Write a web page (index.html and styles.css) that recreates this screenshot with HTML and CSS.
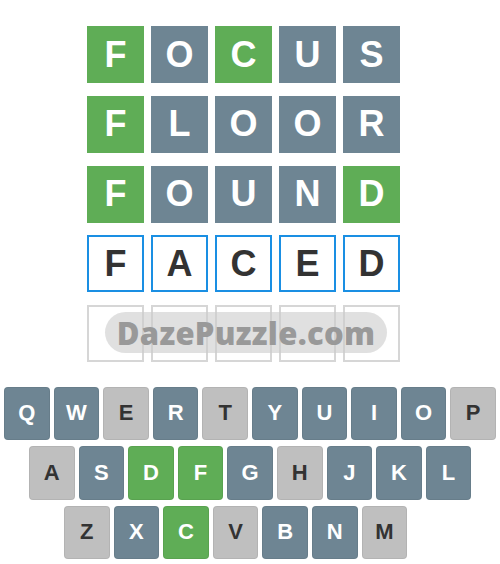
FILE: index.html
```html
<!DOCTYPE html>
<html>
<head>
<meta charset="utf-8">
<link rel="stylesheet" href="styles.css">
</head>
<body>
<div class="page">
  <div class="board">
    <div class="tile g">F</div><div class="tile x">O</div><div class="tile g">C</div><div class="tile x">U</div><div class="tile x">S</div>
    <div class="tile g">F</div><div class="tile x">L</div><div class="tile x">O</div><div class="tile x">O</div><div class="tile x">R</div>
    <div class="tile g">F</div><div class="tile x">O</div><div class="tile x">U</div><div class="tile x">N</div><div class="tile g">D</div>
    <div class="tile t">F</div><div class="tile t">A</div><div class="tile t">C</div><div class="tile t">E</div><div class="tile t">D</div>
    <div class="tile e"></div><div class="tile e"></div><div class="tile e"></div><div class="tile e"></div><div class="tile e"></div>
    <div class="mark">DazePuzzle.com</div>
  </div>
  <div class="keyboard">
    <div class="krow r1">
      <div class="key x">Q</div><div class="key x">W</div><div class="key l">E</div><div class="key x">R</div><div class="key l">T</div><div class="key x">Y</div><div class="key x">U</div><div class="key x">I</div><div class="key x">O</div><div class="key l">P</div>
    </div>
    <div class="krow r2">
      <div class="key l">A</div><div class="key x">S</div><div class="key g">D</div><div class="key g">F</div><div class="key x">G</div><div class="key l">H</div><div class="key x">J</div><div class="key x">K</div><div class="key x">L</div>
    </div>
    <div class="krow r3">
      <div class="key l">Z</div><div class="key x">X</div><div class="key g">C</div><div class="key l">V</div><div class="key x">B</div><div class="key x">N</div><div class="key l">M</div>
    </div>
  </div>
</div>
</body>
</html>
```

FILE: styles.css
```css
html, body {
  margin: 0;
  padding: 0;
  background: #ffffff;
}
.page {
  width: 500px;
  height: 564px;
  overflow: hidden;
  font-family: "Liberation Sans", Arial, sans-serif;
}
.board {
  position: relative;
  display: grid;
  grid-template-columns: repeat(5, 57px);
  grid-auto-rows: 57px;
  column-gap: 7px;
  row-gap: 12.8px;
  margin: 26px 0 0 87px;
  width: 313px;
}
.tile {
  box-sizing: border-box;
  display: flex;
  align-items: center;
  justify-content: center;
  font-size: 36px;
  font-weight: bold;
  color: #ffffff;
}
.tile.g { background: #5fad56; }
.tile.x { background: #6e8593; }
.tile.t {
  border: 2px solid #1a8fe3;
  color: #333333;
  background: #fff;
}
.tile.e {
  border: 2px solid #d6d6d6;
  background: #fff;
}
.mark {
  position: absolute;
  left: 18px;
  top: 286px;
  width: 282px;
  height: 41px;
  border-radius: 21px;
  background: rgba(205, 205, 205, 0.62);
  color: #999999;
  font-family: "Open Sans", "Liberation Sans", Arial, sans-serif;
  font-size: 31px;
  font-weight: 800;
  letter-spacing: 0.3px;
  display: flex;
  align-items: center;
  justify-content: center;
}
.keyboard {
  margin-top: 24.5px;
  display: flex;
  flex-direction: column;
  gap: 6px;
}
.krow {
  display: flex;
  gap: 4px;
}
.r1 { margin-left: 4px; }
.r2 { margin-left: 29px; }
.r3 { margin-left: 64px; }
.key {
  box-sizing: border-box;
  width: 45.6px;
  height: 53.5px;
  border-radius: 4px;
  display: flex;
  align-items: center;
  justify-content: center;
  font-size: 22px;
  font-weight: bold;
  color: #ffffff;
  box-shadow: inset 0 0 0 1px rgba(0, 0, 0, 0.06);
}
.key.x { background: #6e8593; }
.key.g { background: #5fad56; }
.key.l { background: #bfbfbf; color: #333333; }
```
